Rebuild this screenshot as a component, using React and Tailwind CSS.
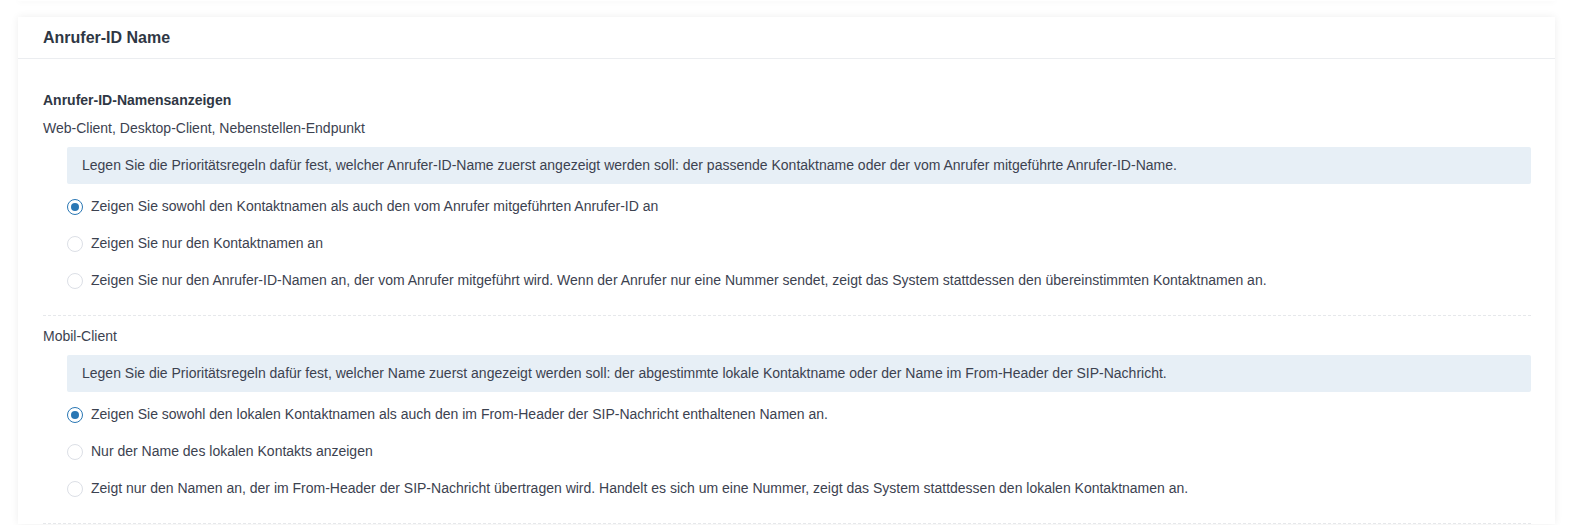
import React from 'react';

const font = { fontFamily: '"Liberation Sans", Arial, sans-serif' };

const Radio = ({ checked, label }) => (
  <label className="flex h-[37px] items-center">
    <span
      className={
        'mr-[8px] flex h-[16px] w-[16px] shrink-0 items-center justify-center rounded-full border bg-white ' +
        (checked ? 'border-[#2a77b4]' : 'border-[#dcdfe6]')
      }
    >
      {checked && <span className="h-[8px] w-[8px] rounded-full bg-[#2a77b4]" />}
    </span>
    <span className="text-[14px] text-[#3c4250]">{label}</span>
  </label>
);

const Group = ({ title, hint, options, selected }) => (
  <div>
    <div className="h-[20px] text-[14px] leading-[20px] text-[#3c4250]">{title}</div>
    <div className="ml-[24px] mt-[9px]">
      <div className="flex h-[37px] items-center rounded-[2px] bg-[#e7eff6] px-[15px] text-[14px] text-[#3c4250]">
        {hint}
      </div>
      <div className="mt-[4px]">
        {options.map((opt, i) => (
          <Radio key={i} checked={i === selected} label={opt} />
        ))}
      </div>
    </div>
    <div className="mt-[16px] border-t border-dashed border-[#e6e8eb]" />
  </div>
);

export default function App() {
  return (
    <div className="min-h-screen bg-white px-[18px]" style={font}>
      <div className="h-[1px] w-[1537px] bg-white shadow-[0_0_6px_rgba(0,0,0,0.12)]" />
      <div className="mt-[16px] w-[1537px] bg-white shadow-[0_0_8px_rgba(0,0,0,0.07)]">
        <div className="flex h-[42px] items-center border-b border-[#ebedf0] px-[25px]">
          <h2 className="text-[16px] font-bold text-[#2f3744]">Anrufer-ID Name</h2>
        </div>
        <div className="pl-[25px] pr-[24px] pt-[31px]">
          <div className="h-[20px] text-[14px] font-bold leading-[20px] text-[#2f3744]">Anrufer-ID-Namensanzeigen</div>
          <div className="mt-[8px]">
            <Group
              title="Web-Client, Desktop-Client, Nebenstellen-Endpunkt"
              hint="Legen Sie die Prioritätsregeln dafür fest, welcher Anrufer-ID-Name zuerst angezeigt werden soll: der passende Kontaktname oder der vom Anrufer mitgeführte Anrufer-ID-Name."
              selected={0}
              options={[
                'Zeigen Sie sowohl den Kontaktnamen als auch den vom Anrufer mitgeführten Anrufer-ID an',
                'Zeigen Sie nur den Kontaktnamen an',
                'Zeigen Sie nur den Anrufer-ID-Namen an, der vom Anrufer mitgeführt wird. Wenn der Anrufer nur eine Nummer sendet, zeigt das System stattdessen den übereinstimmten Kontaktnamen an.',
              ]}
            />
          </div>
          <div className="mt-[10px]">
            <Group
              title="Mobil-Client"
              hint="Legen Sie die Prioritätsregeln dafür fest, welcher Name zuerst angezeigt werden soll: der abgestimmte lokale Kontaktname oder der Name im From-Header der SIP-Nachricht."
              selected={0}
              options={[
                'Zeigen Sie sowohl den lokalen Kontaktnamen als auch den im From-Header der SIP-Nachricht enthaltenen Namen an.',
                'Nur der Name des lokalen Kontakts anzeigen',
                'Zeigt nur den Namen an, der im From-Header der SIP-Nachricht übertragen wird. Handelt es sich um eine Nummer, zeigt das System stattdessen den lokalen Kontaktnamen an.',
              ]}
            />
          </div>
        </div>
      </div>
    </div>
  );
}
